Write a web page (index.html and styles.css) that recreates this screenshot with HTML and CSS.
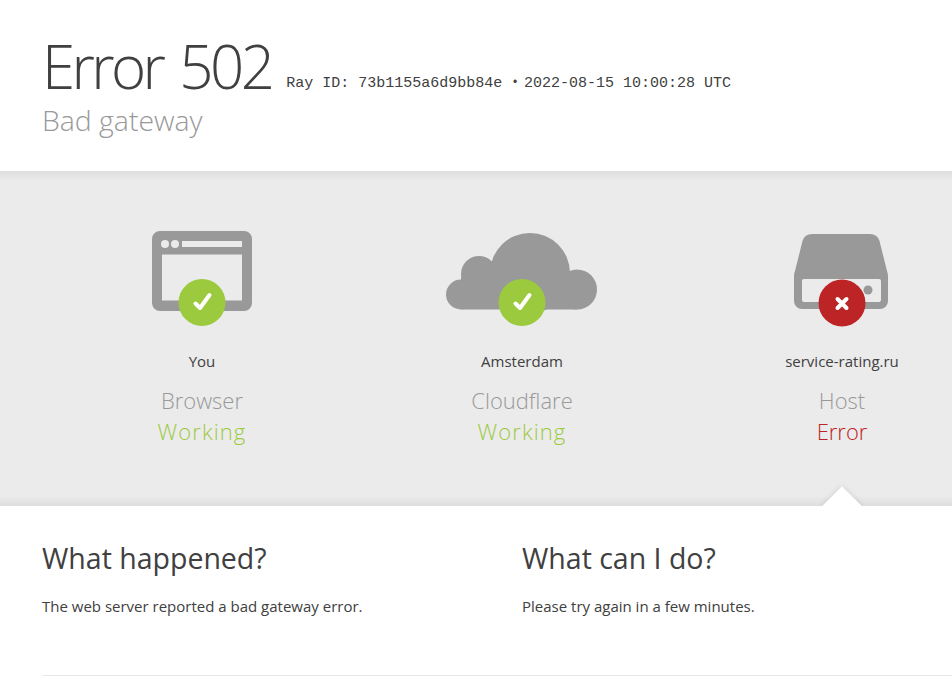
FILE: index.html
```html
<!DOCTYPE html>
<html>
<head>
    <meta charset="utf-8">
    <title>Error 502 - Bad gateway</title>
    <link rel="stylesheet" href="styles.css">
</head>
<body>
<header class="error-header">
    <h1 class="error-title">
        <span class="error-code">Error 502</span>
        <span class="ray-info">
            <span class="ray-line">Ray ID: 73b1155a6d9bb84e</span>
            <span class="ray-dot">&bull;</span>
            <span class="ray-line">2022-08-15 10:00:28 UTC</span>
        </span>
    </h1>
    <h2 class="error-subtitle">Bad gateway</h2>
</header>

<section class="status-band">
    <div class="status-row">
        <div class="status-col">
            <svg class="status-icon" viewBox="0 0 160 100" width="160" height="100">
                <path class="icon-grey" fill-rule="evenodd" d="M38 4h84a8 8 0 0 1 8 8v64a8 8 0 0 1-8 8H38a8 8 0 0 1-8-8V12a8 8 0 0 1 8-8zM40 27.500v46h80v-46z"/>
                <circle class="icon-bg" cx="43" cy="17" r="4"/>
                <circle class="icon-bg" cx="53" cy="17" r="4"/>
                <rect class="icon-bg" x="60" y="14" width="60" height="6"/>
                <circle class="badge-ok" cx="80" cy="75.500" r="23.500"/>
                <path class="badge-mark" d="M73.500 76.500l4.500 4.500L87.500 68"/>
            </svg>
            <div class="status-place">You</div>
            <div class="status-name">Browser</div>
            <div class="status-state state-ok">Working</div>
        </div>
        <div class="status-col">
            <svg class="status-icon" viewBox="0 0 160 100" width="160" height="100">
                <circle class="icon-grey" cx="19" cy="67.500" r="15"/>
                <circle class="icon-grey" cx="37" cy="47" r="18"/>
                <circle class="icon-grey" cx="88" cy="46" r="40"/>
                <circle class="icon-grey" cx="135" cy="62.500" r="20"/>
                <rect class="icon-grey" x="19" y="50" width="116" height="32.500"/>
                <circle class="badge-ok" cx="80" cy="75.500" r="23.500"/>
                <path class="badge-mark" d="M73.500 76.500l4.500 4.500L87.500 68"/>
            </svg>
            <div class="status-place">Amsterdam</div>
            <div class="status-name">Cloudflare</div>
            <div class="status-state state-ok">Working</div>
        </div>
        <div class="status-col status-col-last">
            <svg class="status-icon" viewBox="0 0 160 100" width="160" height="100">
                <path class="icon-grey" d="M50 7h58a10 10 0 0 1 9.500 7L125 44a12 12 0 0 1 1 5v25a8 8 0 0 1-8 8H40a8 8 0 0 1-8-8V49a12 12 0 0 1 1-5L40.500 14a10 10 0 0 1 9.500-7z"/>
                <rect class="icon-bg" x="40" y="52" width="79" height="23" rx="2"/>
                <circle class="icon-grey" cx="106" cy="63" r="4.500"/>
                <circle class="badge-err" cx="80" cy="76" r="23.500"/>
                <path class="badge-mark" d="M75.500 72l9 9M84.500 72l-9 9"/>
            </svg>
            <div class="status-place">service-rating.ru</div>
            <div class="status-name">Host</div>
            <div class="status-state state-err">Error</div>
        </div>
    </div>
    <div class="band-arrow"></div>
</section>

<section class="help-section">
    <div class="help-col">
        <h2 class="help-title">What happened?</h2>
        <p class="help-text">The web server reported a bad gateway error.</p>
    </div>
    <div class="help-col">
        <h2 class="help-title">What can I do?</h2>
        <p class="help-text">Please try again in a few minutes.</p>
    </div>
</section>

<div class="footer-line"></div>
</body>
</html>
```

FILE: styles.css
```css
html, body {
    margin: 0;
    height: 682px;
    overflow: hidden;
    background-color: #ffffff;
    color: #404040;
    font-family: "Open Sans", "Liberation Sans", sans-serif;
}

.error-header {
    height: 171px;
    box-sizing: border-box;
    padding: 30px 0 0 42px;
}

.error-title {
    margin: 0;
    display: flex;
    align-items: flex-end;
    font-weight: 300;
    white-space: nowrap;
}

.error-code {
    font-size: 60px;
    line-height: 72px;
    letter-spacing: -3.6px;
    word-spacing: 5px;
    color: #404040;
}

.ray-info {
    display: flex;
    align-items: baseline;
    margin: 0 0 10px 15px;
    line-height: 16px;
}

.ray-line {
    font-family: "Liberation Mono", monospace;
    font-size: 15px;
    font-weight: 400;
}

.ray-dot {
    margin: 0 6px 0 10px;
    font-size: 15px;
    font-weight: 400;
}

.error-subtitle {
    margin: -1px 0 0;
    font-size: 28.4px;
    line-height: 38px;
    font-weight: 300;
    color: #999999;
}

.status-band {
    position: relative;
    height: 335px;
    background-image: linear-gradient(#dedede, #ebebeb 3%, #ebebeb 97%, #dedede);
}

.status-row {
    display: flex;
    padding-left: 42px;
    padding-top: 56px;
}

.status-col {
    flex: 0 0 320px;
    display: flex;
    flex-direction: column;
    align-items: center;
    text-align: center;
}

.status-col-last {
    flex: 0 0 220px;
    margin-left: 50px;
}

.status-icon {
    display: block;
}

.icon-grey {
    fill: #999999;
}

.icon-bg {
    fill: #ebebeb;
}

.badge-ok {
    fill: #9bca3e;
}

.badge-err {
    fill: #bd2426;
}

.badge-mark {
    fill: none;
    stroke: #ffffff;
    stroke-width: 4;
    stroke-linecap: round;
    stroke-linejoin: round;
}

.status-place {
    margin-top: 24px;
    font-size: 15px;
    line-height: 20px;
}

.status-name {
    margin-top: 14px;
    font-size: 22px;
    line-height: 31px;
    font-weight: 300;
    color: #999999;
}

.status-state {
    font-size: 22px;
    line-height: 31px;
    font-weight: 350;
}

.state-ok {
    color: #9bca3e;
    letter-spacing: 1.1px;
}

.state-err {
    color: #bd2426;
}

/* white notch under the last column, soft shadow clipped to the band */
.band-arrow {
    position: absolute;
    left: 802px;
    bottom: 0;
    width: 80px;
    height: 30px;
    overflow: hidden;
}

.band-arrow::after {
    content: "";
    position: absolute;
    left: 26px;
    top: 16px;
    width: 28px;
    height: 28px;
    background-color: #ffffff;
    box-shadow: 0 0 6px rgba(0, 0, 0, 0.12);
    transform: rotate(45deg);
}

.help-section {
    display: flex;
    padding: 34px 0 0 42px;
}

.help-col {
    flex: 0 0 480px;
}

.help-col + .help-col {
    flex: 1 1 auto;
}

.help-title {
    margin: 0;
    font-size: 28.5px;
    line-height: 36px;
    font-weight: 400;
}

.help-text {
    margin: 20px 0 0;
    font-size: 15px;
    line-height: 20px;
}

.footer-line {
    margin: 59px 0 0 42px;
    border-top: 1px solid #e8e8e8;
}
```
